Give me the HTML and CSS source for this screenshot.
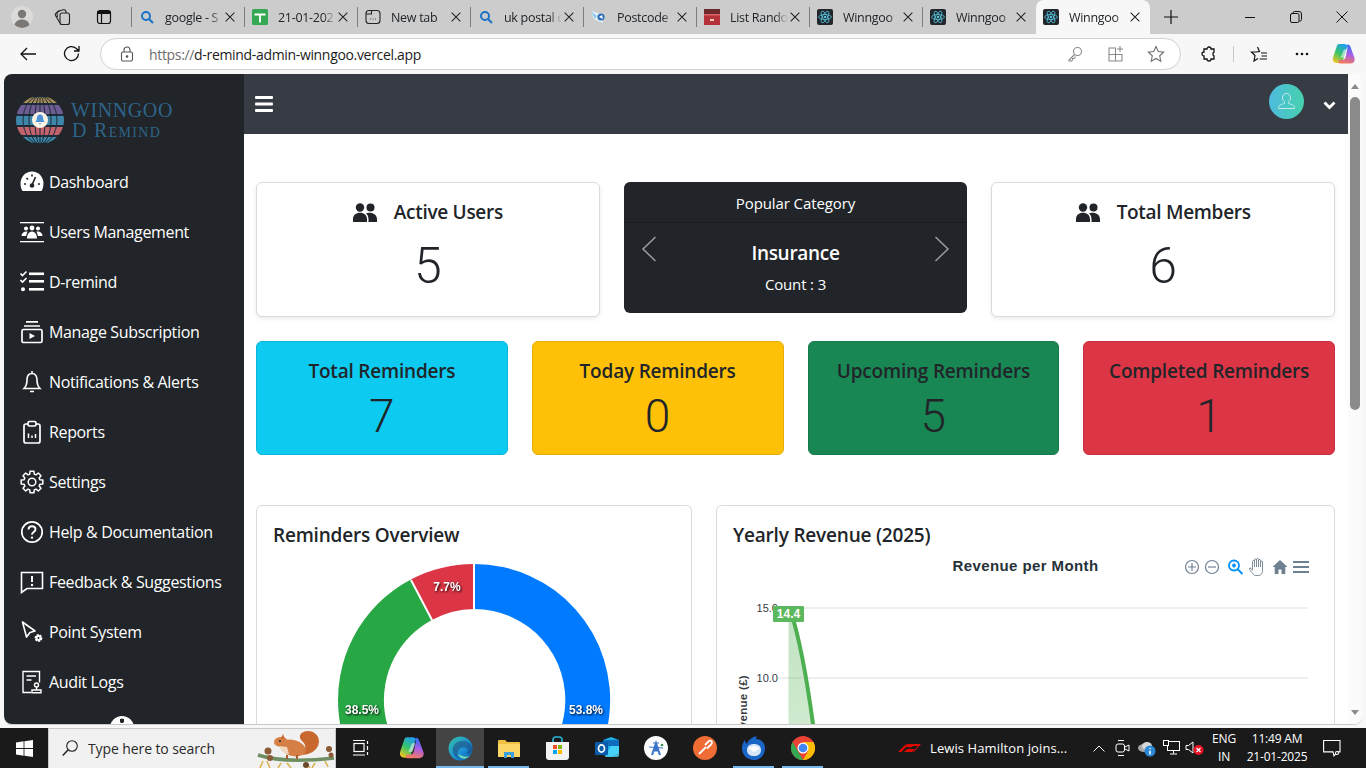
FILE: index.html
```html
<!DOCTYPE html>
<html lang="en">
<head>
  <meta charset="UTF-8" />
  <meta name="viewport" content="width=device-width, initial-scale=1.0"/>
  <title>Winngoo D Remind</title>
  <link rel="stylesheet" href="styles.css">
</head>
<body>
  <svg class="defs" width="0" height="0">
    <defs>
      <symbol id="react" viewBox="0 0 16 16">
        <rect width="16" height="16" rx="2" fill="#20262c"/>
        <g fill="none" stroke="#58c4dc" stroke-width=".8">
          <ellipse cx="8" cy="8" rx="6.4" ry="2.5"/>
          <ellipse cx="8" cy="8" rx="6.4" ry="2.5" transform="rotate(60 8 8)"/>
          <ellipse cx="8" cy="8" rx="6.4" ry="2.5" transform="rotate(120 8 8)"/>
        </g>
        <circle cx="8" cy="8" r="1.3" fill="#58c4dc"/>
      </symbol>
      <symbol id="find" viewBox="0 0 16 16">
        <circle cx="7" cy="7" r="4" fill="none" stroke="#1a73c8" stroke-width="2"/>
        <path d="M10 10l4 4" stroke="#1a73c8" stroke-width="2.2"/>
      </symbol>
      <symbol id="close" viewBox="0 0 16 16">
        <path d="M3 3l10 10M13 3L3 13" stroke="#222" stroke-width="1.2" fill="none"/>
      </symbol>
      <symbol id="copilot" viewBox="0 0 24 24">
        <path d="M8 2h5.500c1.500 0 2.500 1 3 2L11 21H6c-3 0-5-2.500-4-5.500L5.500 5C6 3 7 2 8 2z" fill="url(#copA)"/>
        <path d="M16 2.500c1.500 0 3 .5 3.500 2.500l4 11c.8 3-1 5.500-4 5.500H9.500c-1.500 0-2.500-1-2-2.500l.5-1h3c2 0 3-1 3.500-2.500L16.500 6z" fill="url(#copB)"/>
        <path d="M13 7.500h3l-2.500 8h-4z" fill="#fff" opacity=".55"/>
      </symbol>
      <linearGradient id="copA" x1=".7" y1="0" x2=".2" y2="1">
        <stop offset="0" stop-color="#1f9ff0"/><stop offset=".5" stop-color="#35c46a"/><stop offset="1" stop-color="#f5c71f"/>
      </linearGradient>
      <linearGradient id="copB" x1=".6" y1="0" x2=".4" y2="1">
        <stop offset="0" stop-color="#2d6ff2"/><stop offset=".5" stop-color="#a95ee6"/><stop offset="1" stop-color="#f47a5a"/>
      </linearGradient>
      <linearGradient id="avatarFill" x1="0" y1="0" x2="1" y2="0">
        <stop offset="0" stop-color="#4dbbdd"/><stop offset="1" stop-color="#47d1ae"/>
      </linearGradient>
      <linearGradient id="edgeFill" x1="0" y1="0" x2="1" y2="1">
        <stop offset="0" stop-color="#35c1a4"/><stop offset=".6" stop-color="#1b8fd8"/><stop offset="1" stop-color="#0c5aa6"/>
      </linearGradient>
      <linearGradient id="areaFill" x1="0" y1="0" x2="0" y2="1">
        <stop offset="0" stop-color="#4caf50" stop-opacity=".34"/><stop offset="1" stop-color="#4caf50" stop-opacity=".2"/>
      </linearGradient>
      <clipPath id="globeClip"><circle cx="25" cy="24" r="24"/></clipPath>
    </defs>
  </svg>

  <header class="tabstrip">
    <div class="strip-tools">
      <svg class="profile" width="22" height="22" viewBox="0 0 22 22">
        <circle cx="11" cy="11" r="11" fill="#dcdad8"/>
        <circle cx="11" cy="8" r="4.200" fill="#7b7775"/>
        <path d="M3.500 19c1-4 4-5.500 7.500-5.500s6.500 1.500 7.500 5.500a11 11 0 0 1-15 0z" fill="#7b7775"/>
      </svg>
      <svg class="strip-icon" width="18" height="18" viewBox="0 0 18 18" fill="none" stroke="#222" stroke-width="1.100">
        <rect x="7" y="5" width="9.500" height="11.500" rx="2"/>
        <path d="M7 15 2.500 7.500a2 2 0 0 1 .7-2.500L6.500 3M4.500 9 4 5.500a2 2 0 0 1 1.500-2.500l5-1.200a2 2 0 0 1 2.400 1.500L13.300 5"/>
      </svg>
      <svg class="strip-icon" width="16" height="16" viewBox="0 0 16 16" fill="none" stroke="#111" stroke-width="1.200">
        <rect x="1.500" y="1.500" width="13" height="13" rx="2.500"/>
        <path d="M2 4.500h12v-2H2zM5.500 4.500v9.500" fill="#111"/>
      </svg>
    </div>
    <div class="tab">
      <svg class="favicon"><use href="#find"/></svg>
      <span class="tab-title">google - S</span>
      <svg class="tab-close"><use href="#close"/></svg>
    </div>
    <div class="tab">
      <svg class="favicon" viewBox="0 0 16 16">
        <rect width="16" height="16" rx="1.500" fill="#34a853"/>
        <path d="M2.500 5.500h11M8 5.500v8" stroke="#fff" stroke-width="1.800"/>
      </svg>
      <span class="tab-title">21-01-202</span>
      <svg class="tab-close"><use href="#close"/></svg>
    </div>
    <div class="tab">
      <svg class="favicon" viewBox="0 0 16 16" fill="none" stroke="#222" stroke-width="1.100">
        <rect x="1" y="1.500" width="14" height="13" rx="3"/>
        <path d="M1 5h5.500V1.500M5 10h.8M7.600 10h.8M10.200 10h.8"/>
      </svg>
      <span class="tab-title">New tab</span>
      <svg class="tab-close"><use href="#close"/></svg>
    </div>
    <div class="tab">
      <svg class="favicon"><use href="#find"/></svg>
      <span class="tab-title">uk postal c</span>
      <svg class="tab-close"><use href="#close"/></svg>
    </div>
    <div class="tab">
      <svg class="favicon" viewBox="0 0 16 16">
        <path d="M0 2l9 3 3 9-9-4z" fill="#e9f5fc"/>
        <path d="M0 2l6 5-2 3z" fill="#8cc6ea"/>
        <circle cx="10" cy="8" r="3.600" fill="#2f6fb5"/>
        <path d="M8 8l3-2 1 4z" fill="#fff"/>
      </svg>
      <span class="tab-title">Postcode</span>
      <svg class="tab-close"><use href="#close"/></svg>
    </div>
    <div class="tab">
      <svg class="favicon" viewBox="0 0 16 16">
        <rect width="16" height="16" fill="#b5323a"/>
        <rect width="16" height="5" fill="#6d2a2a"/>
        <rect y="5" width="16" height="1.500" fill="#d9646a"/>
        <rect x="6" y="10" width="4" height="2" fill="#e8c9c0"/>
      </svg>
      <span class="tab-title">List Rando</span>
      <svg class="tab-close"><use href="#close"/></svg>
    </div>
    <div class="tab">
      <svg class="favicon"><use href="#react"/></svg>
      <span class="tab-title">Winngoo</span>
      <svg class="tab-close"><use href="#close"/></svg>
    </div>
    <div class="tab">
      <svg class="favicon"><use href="#react"/></svg>
      <span class="tab-title">Winngoo</span>
      <svg class="tab-close"><use href="#close"/></svg>
    </div>
    <div class="tab active">
      <svg class="favicon"><use href="#react"/></svg>
      <span class="tab-title">Winngoo</span>
      <svg class="tab-close"><use href="#close"/></svg>
    </div>
    <svg class="new-tab" width="16" height="16" viewBox="0 0 16 16"><path d="M8 1v14M1 8h14" stroke="#111" stroke-width="1.200"/></svg>
    <div class="win-controls">
      <svg width="12" height="12" viewBox="0 0 12 12"><path d="M1 6.500h10" stroke="#111" stroke-width="1"/></svg>
      <svg width="12" height="12" viewBox="0 0 12 12" fill="none" stroke="#111"><rect x=".5" y="2.500" width="8.500" height="9" rx="1.500"/><path d="M3 2.500V2A1.500 1.500 0 0 1 4.500.5H9A2.500 2.500 0 0 1 11.500 3v5.500A1.500 1.500 0 0 1 9.500 10"/></svg>
      <svg width="12" height="12" viewBox="0 0 12 12"><path d="M.5.500l11 11M11.500.500l-11 11" stroke="#111" stroke-width="1"/></svg>
    </div>
  </header>

  <div class="toolbar">
    <svg class="tool-back" width="18" height="18" viewBox="0 0 18 18" fill="none" stroke="#111" stroke-width="1.300"><path d="M17 9H2M8 3 2 9l6 6"/></svg>
    <svg class="tool-reload" width="18" height="18" viewBox="0 0 18 18" fill="none" stroke="#111" stroke-width="1.300"><path d="M15.500 8.500A7 7 0 1 1 13 3.200L15.800 5.800M16 1v5h-5"/></svg>
    <div class="address">
      <svg width="14" height="16" viewBox="0 0 14 16" fill="none" stroke="#555" stroke-width="1.100"><rect x="1.500" y="6" width="11" height="9" rx="1.500"/><path d="M4 6V4a3 3 0 0 1 6 0v2"/><circle cx="7" cy="10.500" r=".8" fill="#555"/></svg>
      <span class="url"><span class="url-scheme">https://</span>d-remind-admin-winngoo.vercel.app</span>
      <div class="address-icons">
        <svg width="16" height="16" viewBox="0 0 16 16" fill="none" stroke="#8a8a8a" stroke-width="1.100"><circle cx="10.500" cy="5.500" r="4"/><path d="M7.500 8.500 2 14v1h2.500l1-1v-1.500H7l1.500-2"/></svg>
        <svg width="16" height="16" viewBox="0 0 16 16" fill="none" stroke="#8a8a8a" stroke-width="1.100"><path d="M9 2H2v13h13V8M1.500 8.500h13M8.500 2v13M13 0v6M10 3h6"/></svg>
        <svg width="18" height="18" viewBox="0 0 18 18" fill="none" stroke="#6e6e6e" stroke-width="1.100"><path d="M9 1.500l2.300 5 5.400.6-4 3.700 1.100 5.400L9 13.500l-4.800 2.700 1.100-5.400-4-3.700 5.400-.6z"/></svg>
      </div>
    </div>
    <div class="tool-right">
      <svg class="tool-ext" width="16" height="16" viewBox="0 0 16 16" fill="none" stroke="#111" stroke-width="1.300"><path d="M6 3a2 2 0 0 1 4 0h3v3.200a2 2 0 0 0 0 3.600V13H10a2 2 0 0 1-4 0H3v-3a2 2 0 0 1 0-4V3z"/></svg>
      <span class="tool-sep"></span>
      <svg class="tool-fav" width="18" height="18" viewBox="0 0 18 18" fill="none" stroke="#111" stroke-width="1.200"><path d="M7.500 2 9.500 6.500 6 7H1.500l3.500 3.500-1 5.500 4-2.500M11 8h6M11.500 11h5.500M9.500 14H17"/></svg>
      <svg class="tool-more" width="14" height="4" viewBox="0 0 14 4" fill="#111"><circle cx="2" cy="2" r="1.300"/><circle cx="7" cy="2" r="1.300"/><circle cx="12" cy="2" r="1.300"/></svg>
      <svg class="tool-copilot" width="24" height="24"><use href="#copilot"/></svg>
    </div>
  </div>

  <div class="viewport">
    <aside class="sidebar">
      <div class="brand">
        <svg class="globe" width="50" height="48" viewBox="0 0 50 48">
          <g clip-path="url(#globeClip)">
            <rect width="50" height="48" fill="#1c2c38"/>
            <rect y="1" width="50" height="6" fill="#a88a55"/>
            <rect y="9" width="50" height="9" fill="#6f5c92"/>
            <rect y="20" width="50" height="9" fill="#3f86a8"/>
            <rect y="31" width="50" height="8" fill="#c2626c"/>
            <rect y="41" width="50" height="6" fill="#3f86a8"/>
            <g fill="none" stroke="#1c2c38" stroke-width="1">
              <ellipse cx="25" cy="24" rx="5" ry="24"/>
              <ellipse cx="25" cy="24" rx="11" ry="24"/>
              <ellipse cx="25" cy="24" rx="17" ry="24"/>
              <path d="M25 0v48"/>
            </g>
          </g>
          <circle cx="25" cy="24" r="8" fill="#fbf3e6"/>
          <path d="M25 18.500c-2.300 0-3.200 2-3.200 4 0 1.600-.9 2.800-1.600 3.600h9.600c-.7-.8-1.600-2-1.600-3.600 0-2-.9-4-3.200-4zM23.800 27h2.400L25 28.500z" fill="#4f94d8"/>
        </svg>
        <div class="brand-name">
          <span class="brand-top">WINNGOO</span>
          <span class="brand-sub">D Remind</span>
        </div>
      </div>
      <nav class="nav">
        <a class="nav-item">
          <svg class="nav-icon" viewBox="0 0 24 24">
            <path d="M12 1.500C5.500 1.500.5 7 .5 13.500c0 3 .8 5.500 2 7.500h19c1.200-2 2-4.500 2-7.500C23.500 7 18.500 1.500 12 1.500z" fill="#fff"/>
            <path d="M12 15 15.500 7" stroke="#212529" stroke-width="1.700"/>
            <path d="M4 14h2M18 14h2M6.500 8 8 9.500M12 4.500v2" stroke="#212529" stroke-width="1.700"/>
            <circle cx="12" cy="15.500" r="2.300" fill="#212529"/>
          </svg>
          <span>Dashboard</span>
        </a>
        <a class="nav-item">
          <svg class="nav-icon" viewBox="0 0 24 24" fill="#fff">
            <rect y="2" width="24" height="1.300"/><rect y="21" width="24" height="1.300"/>
            <circle cx="6" cy="8.500" r="2"/><circle cx="12" cy="8" r="2.400"/><circle cx="18" cy="8.500" r="2"/>
            <path d="M1.500 16c0-2.500 2-4.500 5-4.500h1L6 16zM22.500 16c0-2.500-2-4.500-5-4.500h-1l1.500 4.500zM7 18.500c0-4 2-7 5-7s5 3 5 7z"/>
          </svg>
          <span>Users Management</span>
        </a>
        <a class="nav-item">
          <svg class="nav-icon" viewBox="0 0 24 24" fill="#fff">
            <path d="M.5 3.500l2 2L6.500 1.500M.5 10l2 2 4-4" fill="none" stroke="#fff" stroke-width="1.600"/>
            <rect x="9" y="2.500" width="15" height="2.600"/><rect x="9" y="10" width="15" height="2.600"/><rect x="9" y="18" width="15" height="2.600"/>
            <circle cx="3" cy="19.300" r="2"/>
          </svg>
          <span>D-remind</span>
        </a>
        <a class="nav-item">
          <svg class="nav-icon" viewBox="0 0 24 24" fill="none" stroke="#fff" stroke-width="1.700">
            <path d="M6 1.800h12M4 6h16"/>
            <rect x="2" y="9.500" width="20" height="13" rx="1.500"/>
            <path d="M9.500 13v6l5.500-3z" fill="#fff" stroke="none"/>
          </svg>
          <span>Manage Subscription</span>
        </a>
        <a class="nav-item">
          <svg class="nav-icon" viewBox="0 0 24 24" fill="none" stroke="#fff" stroke-width="1.600">
            <path d="M12 3.500c-3.500 0-5 3-5 6.500 0 5-1.500 7-3 8.500h16c-1.500-1.500-3-3.500-3-8.500 0-3.500-1.500-6.500-5-6.500zM12 1v2.500M10 21.500h4"/>
          </svg>
          <span>Notifications &amp; Alerts</span>
        </a>
        <a class="nav-item">
          <svg class="nav-icon" viewBox="0 0 24 24" fill="none" stroke="#fff" stroke-width="1.700">
            <path d="M8 4H6a2 2 0 0 0-2 2v15a2 2 0 0 0 2 2h12a2 2 0 0 0 2-2V6a2 2 0 0 0-2-2h-2"/>
            <rect x="8" y="1.500" width="8" height="4.500" rx="1.500"/>
            <path d="M8.500 18v-4.500M12 18v-2.500M15.500 18v-4" stroke-width="1.500"/>
          </svg>
          <span>Reports</span>
        </a>
        <a class="nav-item">
          <svg class="nav-icon" viewBox="0 0 24 24" fill="none" stroke="#fff" stroke-width="1.500">
            <polygon stroke-linejoin="round" transform="translate(12 12)" points="7.880,-2.260 10.830,-1.910 10.830,1.910 7.880,2.260 7.170,3.970 9.010,6.310 6.310,9.010 3.970,7.170 2.260,7.880 1.910,10.830 -1.910,10.830 -2.260,7.880 -3.970,7.170 -6.310,9.010 -9.010,6.310 -7.170,3.970 -7.880,2.260 -10.830,1.910 -10.830,-1.910 -7.880,-2.260 -7.170,-3.970 -9.010,-6.310 -6.310,-9.010 -3.970,-7.170 -2.260,-7.880 -1.910,-10.830 1.910,-10.830 2.260,-7.880 3.970,-7.170 6.310,-9.010 9.010,-6.310 7.170,-3.970"/>
            <circle cx="12" cy="12" r="3.800"/>
          </svg>
          <span>Settings</span>
        </a>
        <a class="nav-item">
          <svg class="nav-icon" viewBox="0 0 24 24" fill="none" stroke="#fff" stroke-width="1.700">
            <circle cx="12" cy="12" r="10.200"/>
            <path d="M8.500 9.500c0-2 1.500-3.300 3.500-3.300s3.500 1.300 3.500 3c0 3-3.500 2.800-3.500 5.500" stroke-width="1.900"/>
            <circle cx="12" cy="17.600" r="1.200" fill="#fff" stroke="none"/>
          </svg>
          <span>Help &amp; Documentation</span>
        </a>
        <a class="nav-item">
          <svg class="nav-icon" viewBox="0 0 24 24" fill="none" stroke="#fff" stroke-width="1.600">
            <path d="M1.500 2.500h21v16H7L1.500 22.500z"/>
            <path d="M12 6v6" stroke-width="2"/>
            <circle cx="12" cy="15" r="1.200" fill="#fff" stroke="none"/>
          </svg>
          <span>Feedback &amp; Suggestions</span>
        </a>
        <a class="nav-item">
          <svg class="nav-icon" viewBox="0 0 24 24" fill="none" stroke="#fff" stroke-width="1.600">
            <path d="M2.500 2 6.500 17l3.500-4.500 5-1.500z" stroke-linejoin="round"/>
            <circle cx="18.500" cy="18" r="3" fill="#fff" stroke-width="1.800" stroke-dasharray="2 1"/>
            <circle cx="18.500" cy="18" r="1" fill="#212529" stroke="none"/>
          </svg>
          <span>Point System</span>
        </a>
        <a class="nav-item">
          <svg class="nav-icon" viewBox="0 0 24 24" fill="none" stroke="#fff" stroke-width="1.400">
            <path d="M11 22.500H3V1.500h16.500v11"/>
            <path d="M6.500 6h9.500M6.500 10h5" stroke-width="1.600"/>
            <circle cx="16.500" cy="15" r="2"/>
            <path d="M12 22.800h9v-2.800h-9zM16.500 17v3"/>
          </svg>
          <span>Audit Logs</span>
        </a>
      </nav>
      <div class="collapse-btn"></div>
    </aside>

    <div class="page">
      <div class="topbar">
        <svg width="18" height="16" viewBox="0 0 18 16" fill="#fff"><rect width="18" height="3" rx="1"/><rect y="6.500" width="18" height="3" rx="1"/><rect y="13" width="18" height="3" rx="1"/></svg>
        <div class="topbar-user">
          <svg width="35" height="35" viewBox="0 0 35 35">
            <circle cx="17.500" cy="17.500" r="17.500" fill="url(#avatarFill)"/>
            <g fill="none" stroke="#c5ece6" stroke-width="1">
              <path d="M17.500 9.500c-2.500 0-4 2-4 4.300 0 1.800 1 3.200 2 4v1.500c-2 1-6 1.800-6 4.200v1h16v-1c0-2.400-4-3.200-6-4.200v-1.500c1-.8 2-2.200 2-4 0-2.300-1.500-4.300-4-4.300z"/>
            </g>
          </svg>
          <svg width="13" height="10" viewBox="0 0 13 10"><path d="M1.500 2.500l5 5 5-5" fill="none" stroke="#fff" stroke-width="2.800"/></svg>
        </div>
      </div>

      <main class="content">
        <section class="row-top">
          <div class="card stat-card">
            <h4 class="stat-title">
              <svg width="24" height="19" viewBox="0 0 24 19" fill="#212529"><circle cx="7" cy="4.500" r="4.200"/><circle cx="17.500" cy="4.500" r="4"/><path d="M0 19v-2.500C0 12 3 9.800 7 9.800s7 2.200 7 6.700V19zM15.500 19v-2.500c0-2.700-1-4.800-2.500-6.200 1.200-.6 2.800-.8 4.500-.5 3.500.4 6.500 2.600 6.500 6.500V19z"/></svg>
              Active Users
            </h4>
            <div class="stat-value">5</div>
          </div>
          <div class="card category-card">
            <div class="category-head">Popular Category</div>
            <div class="category-body">
              <svg class="slide-arrow" width="16" height="26" viewBox="0 0 16 26"><path d="M14.500 1 2 13l12.500 12" fill="none" stroke="#9a9c9e" stroke-width="1.500"/></svg>
              <div class="category-text">
                <h5>Insurance</h5>
                <p>Count : 3</p>
              </div>
              <svg class="slide-arrow" width="16" height="26" viewBox="0 0 16 26"><path d="M1.500 1 14 13 1.500 25" fill="none" stroke="#9a9c9e" stroke-width="1.500"/></svg>
            </div>
          </div>
          <div class="card stat-card">
            <h4 class="stat-title">
              <svg width="24" height="19" viewBox="0 0 24 19" fill="#212529"><circle cx="7" cy="4.500" r="4.200"/><circle cx="17.500" cy="4.500" r="4"/><path d="M0 19v-2.500C0 12 3 9.800 7 9.800s7 2.200 7 6.700V19zM15.500 19v-2.500c0-2.700-1-4.800-2.500-6.200 1.200-.6 2.800-.8 4.500-.5 3.500.4 6.500 2.600 6.500 6.500V19z"/></svg>
              Total Members
            </h4>
            <div class="stat-value">6</div>
          </div>
        </section>

        <section class="row-reminders">
          <div class="card reminder-card bg-info">
            <h4 class="reminder-title">Total Reminders</h4>
            <div class="reminder-value">7</div>
          </div>
          <div class="card reminder-card bg-warning">
            <h4 class="reminder-title">Today Reminders</h4>
            <div class="reminder-value">0</div>
          </div>
          <div class="card reminder-card bg-success">
            <h4 class="reminder-title">Upcoming Reminders</h4>
            <div class="reminder-value">5</div>
          </div>
          <div class="card reminder-card bg-danger">
            <h4 class="reminder-title">Completed Reminders</h4>
            <div class="reminder-value">1</div>
          </div>
        </section>

        <section class="row-charts">
          <div class="card chart-card">
            <h4 class="chart-title">Reminders Overview</h4>
            <svg class="chart" width="434" height="300" viewBox="257 553 434 300">
              <path d="M474 564A136 136 0 1 1 441.800 832.100L452.700 788.400A91 91 0 1 0 474 609z" fill="#007bff"/>
              <path d="M441.800 832.100A136 136 0 0 1 410.900 579.500L431.800 620A91 91 0 0 0 452.700 788.400z" fill="#28a745"/>
              <path d="M410.900 579.500A136 136 0 0 1 474 564V609A91 91 0 0 0 431.800 620z" fill="#dc3545"/>
              <path d="M474 564V610M411 580 432 620" stroke="#fff" stroke-width="2"/>
              <g class="donut-labels">
                <text x="447" y="591">7.7%</text>
                <text x="362" y="714">38.5%</text>
                <text x="586" y="714">53.8%</text>
              </g>
            </svg>
          </div>
          <div class="card chart-card">
            <h4 class="chart-title">Yearly Revenue (2025)</h4>
            <svg class="chart" width="617" height="300" viewBox="717 553 617 300">
              <text class="apex-title" x="1025.500" y="571">Revenue per Month</text>
              <g fill="none" stroke="#6e8192" stroke-width="1.200">
                <circle cx="1192" cy="567" r="6.500"/><path d="M1188 567h8M1192 563v8"/>
                <circle cx="1212" cy="567" r="6.500"/><path d="M1208 567h8"/>
              </g>
              <g fill="none" stroke="#008ffb" stroke-width="1.800">
                <circle cx="1234" cy="565.500" r="5"/><path d="M1238 569.500l4.500 4.500M1232 565.500h4M1234 563.500v4"/>
              </g>
              <path d="M1250 568l2.500 2v-8.500a1 1 0 0 1 2 0v-1.500a1 1 0 0 1 2 0v-.5a1 1 0 0 1 2 0v1a1 1 0 0 1 2 0v1.500a1 1 0 0 1 2 0v8.500c0 3-1.500 5-4 5h-2.500c-2 0-3-1.500-6.500-6-.5-1 .5-2 1-1.500zM1254.500 561v6M1256.500 559.500v7.500M1258.500 560v7M1260.500 561.500v5.500" fill="none" stroke="#6e8192" stroke-width=".9"/>
              <path d="M1280 560l-7.500 7h2.200v7h3.800v-4.500h3v4.500h3.800v-7h2.200z" fill="#6e8192"/>
              <path d="M1293 562h16M1293 567h16M1293 572h16" stroke="#6e8192" stroke-width="1.800"/>

              <path d="M778 608H1308M778 678H1308" stroke="#eeeeee" stroke-width="2"/>
              <text class="axis-label" x="778" y="612">15.0</text>
              <text class="axis-label" x="778" y="682">10.0</text>
              <text class="axis-name" transform="translate(747 675) rotate(-90)">Revenue (£)</text>

              <path d="M788.500 612H791C800 640 807 680 813 724L829 853H788.500z" fill="url(#areaFill)"/>
              <path d="M791 612C800 640 807 680 813 724L829 853" fill="none" stroke="#4caf50" stroke-width="4"/>
              <rect x="773" y="606" width="31" height="16" rx="1" fill="#5cb85c"/>
              <text class="point-label" x="788.500" y="618">14.4</text>
            </svg>
          </div>
        </section>
      </main>
    </div>

    <div class="scrollbar">
      <span class="scroll-up"></span>
      <span class="scroll-thumb"></span>
      <span class="scroll-down"></span>
    </div>
  </div>

  <footer class="taskbar">
    <div class="start">
      <svg width="17" height="17" viewBox="0 0 17 17" fill="#fff"><path d="M0 2.400 7.600 1.300v6.800H0zM8.400 1.200 17 0v8.100H8.400zM0 8.900h7.600v6.800L0 14.600zM8.400 8.900H17V17l-8.600-1.200z"/></svg>
    </div>
    <div class="search">
      <svg width="16" height="17" viewBox="0 0 16 17" fill="none" stroke="#222" stroke-width="1.100"><circle cx="10" cy="6" r="5.300"/><path d="M6.200 9.800.8 15.500" stroke-width="1.500"/></svg>
      <span>Type here to search</span>
      <svg class="squirrel" width="80" height="40" viewBox="0 0 80 40">
        <path d="M3 26c18 6 40 7 76 3" fill="none" stroke="#6d8f62" stroke-width="3.500"/>
        <path d="M8 32l-3 7M12 32l3 7M26 34l-3 5M32 34l4 5M52 35l3 4M60 34l-3 5M70 32l3 6" stroke="#d9b24a" stroke-width="1.500"/>
        <circle cx="13" cy="22" r="3.500" fill="#8a5a34"/>
        <circle cx="15" cy="29" r="3" fill="#8a5a34"/>
        <circle cx="74" cy="20" r="3" fill="#8a5a34"/>
        <circle cx="76" cy="26" r="2.500" fill="#8a5a34"/>
        <circle cx="51" cy="36" r="3" fill="#6d4a2a"/>
        <path d="M46 26c8 0 17-4 18-13 0-7-5-11-11-11-5 0-9 3-8 7 1 3 4 4 5 7 1 4-1 7-4 10z" fill="#c8682f"/>
        <ellipse cx="38" cy="19" rx="13" ry="8" transform="rotate(15 38 19)" fill="#d57f46"/>
        <ellipse cx="26" cy="13" rx="7" ry="5" fill="#d57f46"/>
        <path d="M26 9l2-4 2 5z" fill="#c8682f"/>
        <path d="M24 17c2 5 6 8 10 8l-2-7z" fill="#f0d9bd"/>
        <circle cx="25" cy="12" r="1" fill="#222"/>
        <path d="M32 26v4M42 26v4" stroke="#a85c2d" stroke-width="2"/>
      </svg>
    </div>
    <div class="apps">
      <div class="app">
        <svg width="18" height="18" viewBox="0 0 18 18" fill="none" stroke="#fff" stroke-width="1.200"><rect x="2" y="4.500" width="10" height="8"/><path d="M1 1.500h12M1 16h12M15.500 2v3M15.500 7v4M15.500 13v3"/></svg>
      </div>
      <div class="app app-wide"><svg width="26" height="26"><use href="#copilot"/></svg></div>
      <div class="app current running">
        <svg width="25" height="25" viewBox="0 0 24 24">
          <circle cx="12" cy="12" r="11.500" fill="url(#edgeFill)"/>
          <path d="M23.500 13c0-5-4-8.500-9-8.500-6 0-10 4-10 9 0 4 3 8 8 9.500-3-2-4-5-3-8s4-4.500 6.500-4c2.500.4 3.500 2 3 3.500-.3 1-1 1.500-1.500 2 2 1.500 5.500.5 6-3.500z" fill="#1d3f74" opacity=".5"/>
          <path d="M9.500 17c1 3 4 5 7 4.500 1.500-.2 3-1 4-2-2 .5-5 .5-7.500-.5-2-.8-3-2-3.500-2z" fill="#7fe0a8"/>
        </svg>
      </div>
      <div class="app running-split">
        <svg width="22" height="19" viewBox="0 0 22 19">
          <path d="M0 2a1 1 0 0 1 1-1h6l2 2h12a1 1 0 0 1 1 1v14H0z" fill="#f0c040"/>
          <path d="M0 5h22v12a1 1 0 0 1-1 1H1a1 1 0 0 1-1-1z" fill="#fbd767"/>
          <path d="M6 19v-6h10v6h-3v-3H9v3z" fill="#3ba0dc"/>
        </svg>
      </div>
      <div class="app">
        <svg width="23" height="24" viewBox="0 0 23 24">
          <path d="M7 6V3.500A2.500 2.500 0 0 1 9.500 1h4A2.500 2.500 0 0 1 16 3.500V6" fill="none" stroke="#29b6d8" stroke-width="1.600"/>
          <path d="M0 6h23v15a3 3 0 0 1-3 3H3a3 3 0 0 1-3-3z" fill="#f3f3f3"/>
          <rect x="7" y="9" width="4" height="4" fill="#f25022"/><rect x="12" y="9" width="4" height="4" fill="#7fba00"/>
          <rect x="7" y="14" width="4" height="4" fill="#00a4ef"/><rect x="12" y="14" width="4" height="4" fill="#ffb900"/>
        </svg>
      </div>
      <div class="app">
        <svg width="24" height="22" viewBox="0 0 24 22">
          <path d="M8 3l8-3 8 3v13l-8 4-8-2z" fill="#1caee6"/>
          <path d="M8 3h16v6H8z" fill="#0f6cbd"/>
          <path d="M16 9h8v9a2 2 0 0 1-2 2H10z" fill="#50d9ff" opacity=".8"/>
          <rect y="5" width="13" height="13" rx="1" fill="#0a5cab"/>
          <ellipse cx="6.500" cy="11.500" rx="3" ry="3.600" fill="none" stroke="#fff" stroke-width="1.700"/>
        </svg>
      </div>
      <div class="app">
        <svg width="24" height="24" viewBox="0 0 24 24">
          <circle cx="12" cy="12" r="12" fill="#fdfdfd"/>
          <path d="M12 4 7 19h2.200l1-3.500h3.600l1 3.500H17z" fill="#3b73c9"/>
          <path d="M5 11l14 1M9 7l6 0" stroke="#3b73c9" stroke-width="1.200"/>
          <circle cx="18" cy="9" r="1.300" fill="#3f8f4f"/>
        </svg>
      </div>
      <div class="app">
        <svg width="24" height="24" viewBox="0 0 24 24">
          <circle cx="12" cy="12" r="12" fill="#ef6c35"/>
          <path d="M6 18l7-7M12 9l4-4c1-1 3 0 3 1.500 0 1-.5 1.500-1 2l-4 4" fill="none" stroke="#fff" stroke-width="1.800"/>
        </svg>
      </div>
      <div class="app running">
        <svg width="24" height="24" viewBox="0 0 24 24">
          <path d="M12 24C5 24 0 19 0 12 0 8 2 5 3 4c0 2 1 3 2 4 1-4 5-7 10-8-1 1-1 2-1 3 5 0 9 4 9 9 0 7-5 12-11 12z" fill="#1a66c7"/>
          <path d="M12 8c4 0 7 2 7 6s-3 6-7 6-7-2-7-6 3-6 7-6z" fill="#d7e7f7"/>
          <path d="M6 12l6 4 6-4-6-2z" fill="#fff"/>
        </svg>
      </div>
      <div class="app running">
        <svg width="24" height="24" viewBox="0 0 24 24">
          <circle cx="12" cy="12" r="12" fill="#ea4335"/>
          <path d="M12 24A12 12 0 0 1 1.600 6l5.200 9L12 24z" fill="#34a853"/>
          <path d="M22.400 6A12 12 0 0 1 12 24l5.200-9L12 6h10.400z" fill="#fbbc05"/>
          <circle cx="12" cy="12" r="5.500" fill="#fff"/>
          <circle cx="12" cy="12" r="4.300" fill="#4285f4"/>
        </svg>
      </div>
    </div>
    <div class="news">
      <svg width="23" height="8" viewBox="0 0 23 8" fill="#e10600"><path d="M0 8 5 3c2-2 3-3 6-3h5l-3 3H10C8 3 7.500 3.500 6.500 4.500L3.500 8zM6 8l3-3h8l-3 3zM11 3.500 14.500 0H23l-7 8h-1l5-6h-5l-2 1.500z"/></svg>
      <span>Lewis Hamilton joins...</span>
    </div>
    <div class="tray">
      <div class="tray-icon"><svg width="12" height="7" viewBox="0 0 12 7"><path d="M.5 6.500 6 1l5.500 5.500" fill="none" stroke="#fff"/></svg></div>
      <div class="tray-icon">
        <svg width="16" height="18" viewBox="0 0 16 18" fill="none" stroke="#fff" stroke-width="1"><path d="M3 1.500h6M3 16.500h6"/><rect x="1" y="5" width="8.500" height="8" rx="2"/><path d="M10 8l4-2v6l-4-2"/></svg>
      </div>
      <div class="tray-icon">
        <svg width="20" height="17" viewBox="0 0 20 17"><ellipse cx="7" cy="8" rx="6" ry="4" fill="#a8a8a8"/><ellipse cx="10" cy="6" rx="5" ry="4" fill="#d8d8d8"/><circle cx="13" cy="11" r="5.500" fill="#2b88d8"/><path d="M13 8v1M13 10.500v4" stroke="#fff" stroke-width="1.500"/></svg>
      </div>
      <div class="tray-icon">
        <svg width="17" height="16" viewBox="0 0 17 16" fill="none" stroke="#fff" stroke-width="1"><rect x="4.500" y="1.500" width="12" height="9"/><path d="M10.500 10.500v3M7 14h7"/><rect x=".5" y=".5" width="5" height="5" fill="#1a1a1a"/></svg>
      </div>
      <div class="tray-icon">
        <svg width="20" height="16" viewBox="0 0 20 16"><path d="M1 5.500h2.500L8 2v11L3.500 9.500H1z" fill="none" stroke="#fff"/><circle cx="13.500" cy="10" r="5" fill="#e81123"/><path d="M11.500 8l4 4M15.500 8l-4 4" stroke="#fff" stroke-width="1.200"/></svg>
      </div>
      <div class="tray-lang"><span>ENG</span><span>IN</span></div>
      <div class="tray-clock"><span>11:49 AM</span><span>21-01-2025</span></div>
      <div class="tray-notify">
        <svg width="18" height="17" viewBox="0 0 18 17" fill="none" stroke="#fff" stroke-width="1.100"><path d="M.6.600h16.400v11.500h-2.500L11 16l-1-3.900H.6z" transform="translate(0 -.2)"/><circle cx="14" cy="13" r="1.500" fill="#1a1a1a"/></svg>
      </div>
      <div class="show-desktop"></div>
    </div>
  </footer>
</body>
</html>
```

FILE: styles.css
```css
* {
  box-sizing: border-box;
}

html, body {
  height: 100%;
}

body {
  margin: 0;
  width: 1366px;
  height: 768px;
  overflow: hidden;
  display: flex;
  flex-direction: column;
  background: #f7f7f7;
  color: #212529;
  font-family: 'Open Sans', 'Noto Sans', sans-serif;
}

.defs {
  position: absolute;
}

h4, h5, p {
  margin: 0;
}

/* browser chrome */
.tabstrip {
  height: 34px;
  flex: none;
  display: flex;
  align-items: center;
  background: #cccccc;
}

.strip-tools {
  width: 132px;
  flex: none;
  display: flex;
  align-items: center;
}

.profile {
  margin-left: 11px;
}

.strip-icon:nth-child(2) {
  margin-left: 20px;
}

.strip-icon:nth-child(3) {
  margin-left: 25px;
}

.tab {
  position: relative;
  width: 113px;
  height: 34px;
  flex: none;
  display: flex;
  align-items: center;
  padding: 0 8px 0 7px;
  font-size: 12.5px;
}

.tab::before {
  content: '';
  position: absolute;
  left: -1px;
  top: 7px;
  height: 20px;
  width: 1px;
  background: #7d7d7d;
}

.tab.active {
  width: 114px;
  background: #f7f7f7;
  border-radius: 8px 8px 0 0;
}

.tab.active::before {
  display: none;
}

.favicon {
  width: 16px;
  height: 16px;
  flex: none;
}

.tab-title {
  flex: 1;
  margin-left: 10px;
  white-space: nowrap;
  overflow: hidden;
  letter-spacing: -0.3px;
  -webkit-mask-image: linear-gradient(to right, #000 78%, transparent 100%);
  mask-image: linear-gradient(to right, #000 78%, transparent 100%);
}

.tab-close {
  width: 14px;
  height: 14px;
  flex: none;
}

.new-tab {
  margin-left: 13px;
}

.win-controls {
  margin-left: auto;
  display: flex;
  align-items: center;
  gap: 34px;
  padding-right: 18px;
}

.toolbar {
  height: 40px;
  flex: none;
  display: flex;
  align-items: center;
  background: #f7f7f7;
}

.tool-back {
  margin-left: 19px;
}

.tool-reload {
  margin-left: 26px;
}

.address {
  width: 1081px;
  height: 32px;
  margin-left: 19px;
  display: flex;
  align-items: center;
  padding-left: 19px;
  background: #fff;
  border: 1px solid #d2d2d2;
  border-radius: 16px;
}

.url {
  margin-left: 15px;
  font-size: 14px;
  letter-spacing: -0.33px;
  color: #1c1c1c;
}

.url-scheme {
  color: #6d6d6d;
}

.address-icons {
  margin-left: auto;
  display: flex;
  align-items: center;
  gap: 24px;
  padding-right: 15px;
}

.tool-right {
  flex: 1;
  display: flex;
  align-items: center;
}

.tool-ext {
  margin-left: 20px;
}

.tool-sep {
  width: 1px;
  height: 16px;
  margin-left: 16px;
  background: #c8c8c8;
}

.tool-fav {
  margin-left: 16px;
}

.tool-more {
  margin-left: 27px;
}

.tool-copilot {
  margin-left: 22px;
}

.viewport {
  height: 650px;
  flex: none;
  margin: 0 4px;
  display: flex;
  overflow: hidden;
  background: #fff;
  border-radius: 8px;
  box-shadow: 0 1px 0 #c9c9c9;
}

/* sidebar */
.sidebar {
  position: relative;
  width: 240px;
  flex: none;
  background: #212529;
  color: #fff;
}

.brand {
  height: 83px;
  display: flex;
  align-items: center;
  padding: 8px 0 0 11px;
}

.brand-name {
  margin-left: 6px;
  display: flex;
  flex-direction: column;
  color: #2d6488;
  font-family: 'Liberation Serif', serif;
  line-height: 20px;
  letter-spacing: 0.6px;
}

.brand-top {
  font-size: 20px;
}

.brand-sub {
  font-size: 20px;
  letter-spacing: 1.3px;
  font-variant: small-caps;
  margin-left: 1px;
}

.nav-item {
  height: 50px;
  display: flex;
  align-items: center;
  gap: 5px;
  padding-left: 16px;
  font-size: 16px;
  letter-spacing: -0.35px;
}

.nav-icon {
  width: 24px;
  height: 24px;
  flex: none;
}

.collapse-btn {
  position: absolute;
  left: 106px;
  top: 642px;
  width: 24px;
  height: 24px;
  background: radial-gradient(circle at 50% 20%, #212529 0 2px, #fff 2.5px);
  border-radius: 50%;
}

/* page */
.page {
  flex: 1;
  min-width: 0;
  display: flex;
  flex-direction: column;
  overflow: hidden;
}

.topbar {
  height: 60px;
  flex: none;
  display: flex;
  align-items: center;
  justify-content: space-between;
  padding: 0 12px 0 11px;
  background: #373b43;
}

.topbar-user {
  display: flex;
  align-items: center;
  gap: 19px;
  margin-top: -6px;
}

.topbar-user svg:last-child {
  margin-top: 7px;
}

.content {
  flex: 1;
  min-height: 0;
  padding: 48px 13px 0 12px;
  overflow: hidden;
}

.card {
  background: #fff;
  border: 1px solid #d9dadb;
  border-radius: 6px;
}

.row-top {
  display: grid;
  grid-template-columns: repeat(3, 1fr);
  gap: 24px;
  height: 135px;
}

.stat-card {
  text-align: center;
  padding-top: 15px;
  box-shadow: 0 2px 4px rgba(0, 0, 0, 0.08);
}

.stat-title {
  display: flex;
  align-items: center;
  justify-content: center;
  gap: 17px;
  height: 28px;
  font-size: 19px;
  font-weight: 600;
  letter-spacing: -0.3px;
}

.stat-value {
  margin-top: 11px;
  font-family: Roboto, sans-serif;
  font-size: 50px;
  line-height: 58px;
  font-weight: 300;
}

.category-card {
  height: 131px;
  background: #212529;
  border: none;
  color: #fff;
  display: flex;
  flex-direction: column;
}

.category-head {
  height: 41px;
  line-height: 43px;
  text-align: center;
  font-size: 15px;
  letter-spacing: -0.1px;
  border-bottom: 1px solid rgba(0, 0, 0, 0.2);
}

.category-body {
  flex: 1;
  display: flex;
  justify-content: space-between;
  padding: 13px 17px 0;
}

.category-text {
  text-align: center;
  padding-top: 3px;
}

.category-text h5 {
  font-size: 19px;
  line-height: 28px;
  font-weight: 600;
  letter-spacing: -0.3px;
}

.category-text p {
  margin-top: 7px;
  font-size: 15px;
  line-height: 20px;
  letter-spacing: -0.15px;
}

.row-reminders {
  display: grid;
  grid-template-columns: repeat(4, 1fr);
  gap: 24px;
  margin-top: 24px;
}

.reminder-card {
  height: 114px;
  padding-top: 15px;
  text-align: center;
  color: #212529;
}

.reminder-title {
  font-size: 19px;
  line-height: 28px;
  font-weight: 600;
  letter-spacing: -0.2px;
}

.reminder-value {
  margin-top: 4px;
  font-family: Roboto, sans-serif;
  font-size: 46px;
  line-height: 54px;
  font-weight: 300;
}

.bg-info {
  background: #0dcaf0;
  border-color: #0bb5d8;
}

.bg-warning {
  background: #ffc107;
  border-color: #e6ae06;
}

.bg-success {
  background: #198754;
  border-color: #167a4b;
}

.bg-danger {
  background: #dc3545;
  border-color: #c62f3e;
}

.row-charts {
  display: grid;
  grid-template-columns: 5fr 7fr;
  gap: 24px;
  margin-top: 50px;
}

.chart-card {
  height: 340px;
  padding: 15px 0 0;
}

.chart-title {
  height: 28px;
  margin-left: 16px;
  font-size: 19px;
  line-height: 28px;
  font-weight: 600;
  letter-spacing: -0.2px;
}

.chart {
  display: block;
  margin-top: 4px;
}

.donut-labels text {
  text-anchor: middle;
  font: bold 12px 'Liberation Sans', sans-serif;
  fill: #fff;
  filter: drop-shadow(1px 1px 1px rgba(0, 0, 0, 0.9));
}

.apex-title {
  text-anchor: middle;
  font: bold 15px 'Liberation Sans', sans-serif;
  letter-spacing: 0.4px;
  fill: #263238;
}

.axis-label {
  text-anchor: end;
  font: 11px 'Liberation Sans', sans-serif;
  fill: #373d3f;
}

.axis-name {
  text-anchor: end;
  font: bold 11.5px 'Liberation Sans', sans-serif;
  letter-spacing: 0.3px;
  fill: #373d3f;
}

.point-label {
  text-anchor: middle;
  font: bold 12px 'Liberation Sans', sans-serif;
  fill: #fff;
}

.scrollbar {
  width: 14px;
  flex: none;
  display: flex;
  flex-direction: column;
  align-items: center;
  background: #fbfbfb;
}

.scroll-up {
  margin-top: 10px;
  border: 4px solid transparent;
  border-top: 0;
  border-bottom: 5px solid #8a8a8a;
}

.scroll-thumb {
  width: 10px;
  height: 313px;
  margin-top: 8px;
  background: #8b8b8b;
  border-radius: 5px;
}

.scroll-down {
  margin-top: auto;
  margin-bottom: 9px;
  border: 4px solid transparent;
  border-bottom: 0;
  border-top: 5px solid #8a8a8a;
}

/* windows taskbar */
.taskbar {
  height: 40px;
  margin-top: 4px;
  flex: none;
  display: flex;
  background: #1a1a1a;
  color: #fff;
}

.start {
  width: 48px;
  display: flex;
  align-items: center;
  justify-content: center;
}

.search {
  position: relative;
  width: 288px;
  display: flex;
  align-items: center;
  padding-left: 13px;
  background: #f1f1f1;
  border: 1px solid #c8c8c8;
  border-bottom: 0;
  color: #2a2a2a;
  font-size: 14px;
  overflow: hidden;
}

.search span {
  margin-left: 10px;
  letter-spacing: -0.1px;
}

.squirrel {
  position: absolute;
  right: 0;
  top: 0;
}

.apps {
  display: flex;
}

.app {
  position: relative;
  width: 49px;
  display: flex;
  align-items: center;
  justify-content: center;
}

.app-wide {
  width: 51px;
}

.current {
  background: #444444;
  width: 48px;
}

.running::after,
.running-split::after {
  content: '';
  position: absolute;
  left: 4px;
  right: 4px;
  bottom: 0;
  height: 2px;
  background: #76b9ed;
}

.current.running::after {
  left: 0;
  right: 0;
}

.news {
  display: flex;
  align-items: center;
  gap: 9px;
  margin-left: 71px;
  font-size: 13px;
  letter-spacing: 0.1px;
}

.tray {
  margin-left: auto;
  display: flex;
  align-items: center;
  height: 100%;
}

.tray-icon {
  width: 24px;
  display: flex;
  justify-content: center;
}

.tray-lang,
.tray-clock {
  display: flex;
  flex-direction: column;
  align-items: center;
  font-size: 12px;
  line-height: 18px;
  letter-spacing: -0.2px;
}

.tray-lang {
  width: 34px;
}

.tray-clock {
  width: 72px;
}

.tray-notify {
  width: 38px;
  display: flex;
  justify-content: center;
}

.show-desktop {
  width: 15px;
}
```
